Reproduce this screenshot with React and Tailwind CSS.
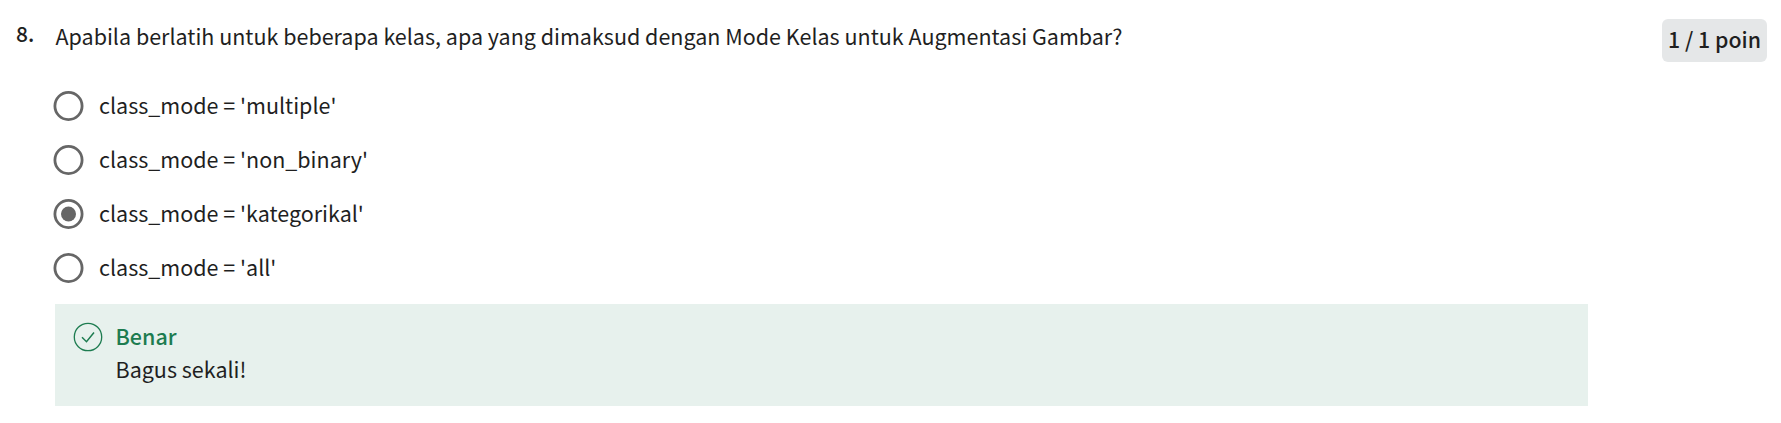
const options = [
  "class_mode = 'multiple'",
  "class_mode = 'non_binary'",
  "class_mode = 'kategorikal'",
  "class_mode = 'all'",
];

const selected = 2;

function Radio({ checked }) {
  return (
    <svg className="size-[30px] shrink-0 overflow-visible" viewBox="0 0 30 30" fill="none">
      <circle cx="14.5" cy="15" r="13.6" stroke="#666666" strokeWidth="2.8" />
      {checked && <circle cx="14.5" cy="15" r="7.5" fill="#666666" />}
    </svg>
  );
}

export default function App() {
  return (
    <main className="flex h-[423px] w-[1781px] items-start bg-white font-['Noto_Sans_CJK_SC','Noto_Sans',sans-serif] text-[21.5px] leading-[32px] text-[#1f1f1f]">
      <span className="mt-[17px] ml-4 w-[39px] shrink-0 text-[21px] font-medium">8.</span>
      <section className="flex w-[1533px] flex-col">
        <h1 className="mt-[20px] pl-[0.5px] whitespace-nowrap">
          Apabila berlatih untuk beberapa kelas, apa yang dimaksud dengan Mode Kelas untuk Augmentasi Gambar?
        </h1>
        <div className="mt-[27px] -ml-[1px] flex flex-col" role="radiogroup">
          {options.map((label, i) => (
            <label key={label} className="flex h-[54px] items-center gap-[15px]">
              <Radio checked={i === selected} />
              <span className="pb-[2px] whitespace-nowrap">{label}</span>
            </label>
          ))}
        </div>
        <div className="mt-[9px] flex h-[102px] bg-[#e7f1ed] pt-[17px] pl-[18px]">
          <svg className="mt-[1px] size-[30px] shrink-0" viewBox="0 0 30 30" fill="none" stroke="#1d7c50">
            <circle cx="15" cy="15" r="13.7" strokeWidth="1.3" />
            <path d="M9 15.2L13.5 19.7L21 10.5" strokeWidth="1.5" />
          </svg>
          <div className="-mt-[1px] ml-[12.5px] flex flex-col gap-[1px]">
            <strong className="font-medium text-[#1d7c50]">Benar</strong>
            <span>Bagus sekali!</span>
          </div>
        </div>
      </section>
      <div className="mt-[19px] ml-[74px] flex h-[43px] w-[105px] items-center justify-center rounded-[6px] bg-[#e5e7e8] pb-[3px] text-[21.3px] font-medium whitespace-nowrap">
        1 / 1 poin
      </div>
    </main>
  );
}
